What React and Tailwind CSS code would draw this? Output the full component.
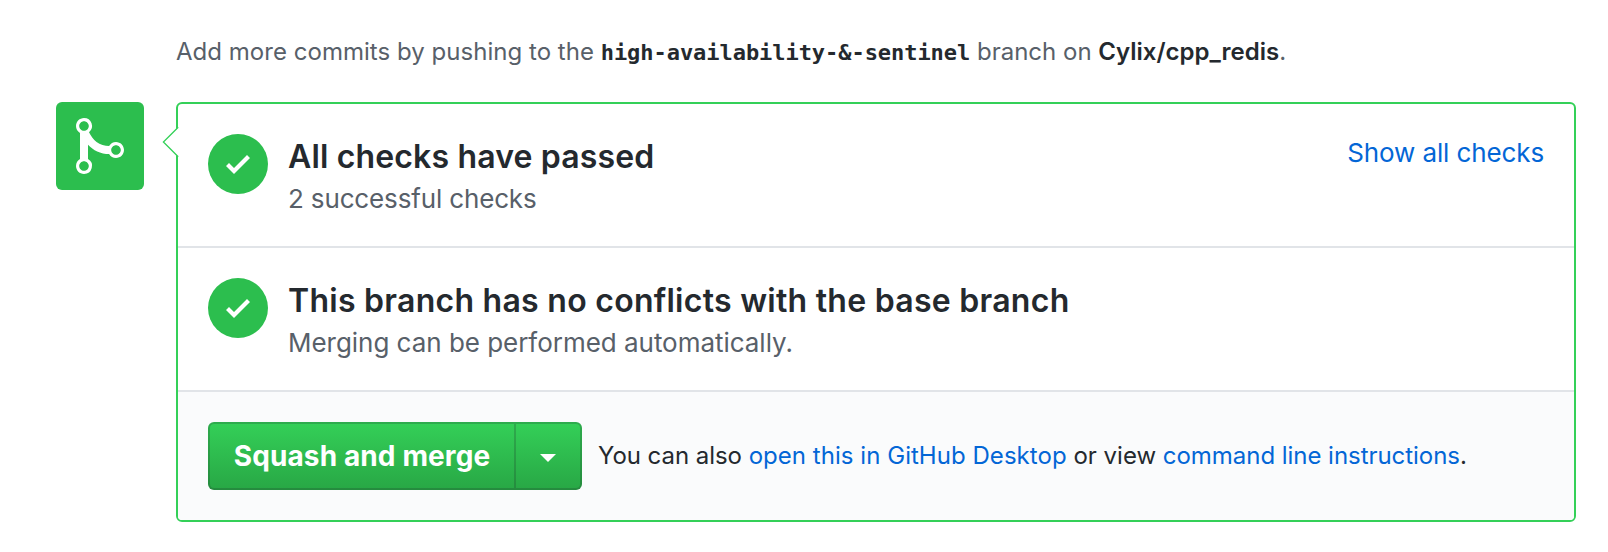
import React from "react";

function CheckCircle() {
  return (
    <div className="flex h-[60px] w-[60px] shrink-0 items-center justify-center rounded-full bg-[#2cbe4e]">
      <svg viewBox="0 0 12 16" className="h-8 w-6" fill="#fff" aria-hidden="true">
        <path fillRule="evenodd" d="M12 5l-8 8-4-4 1.5-1.5L4 10l6.5-6.5L12 5z" />
      </svg>
    </div>
  );
}

function MergeIcon() {
  return (
    <svg viewBox="0 0 12 16" className="h-16 w-12" fill="#fff" aria-hidden="true">
      <path
        fillRule="evenodd"
        d="M10 7c-.73 0-1.38.41-1.73 1.02V8C7.22 7.98 6 7.64 5.14 6.98c-.75-.58-1.5-1.61-1.89-2.44A1.993 1.993 0 0 0 2 .99C.89.99 0 1.89 0 3a2 2 0 0 0 1 1.72v6.56c-.59.35-1 .99-1 1.72 0 1.11.89 2 2 2a1.993 1.993 0 0 0 1-3.72V7.67c.67.7 1.44 1.27 2.3 1.69.86.42 2.03.63 2.97.64v-.02c.36.61 1 1.02 1.73 1.02 1.11 0 2-.89 2-2 0-1.11-.89-2-2-2zm-6.8 6c0 .66-.55 1.2-1.2 1.2-.65 0-1.2-.55-1.2-1.2 0-.65.55-1.2 1.2-1.2.65 0 1.2.55 1.2 1.2zM3.2 3c0 .66-.55 1.2-1.2 1.2C1.35 4.2.8 3.65.8 3c0-.65.55-1.2 1.2-1.2.65 0 1.2.55 1.2 1.2zm6.8 7.2c-.66 0-1.2-.55-1.2-1.2 0-.65.55-1.2 1.2-1.2.65 0 1.2.55 1.2 1.2 0 .65-.55 1.2-1.2 1.2z"
      />
    </svg>
  );
}

function StatusRow({ title, titleClass, detail, detailClass, action }) {
  return (
    <div className="flex h-36 items-start border-b-2 border-[#e1e4e8] px-[30px] pt-[30px]">
      <CheckCircle />
      <div className="ml-5 grow">
        <h3 className={`text-[32px] leading-[45px] font-semibold text-[#24292e] ${titleClass}`}>{title}</h3>
        <p className={`text-[26px] leading-[39px] text-[#586069] ${detailClass}`}>{detail}</p>
      </div>
      {action}
    </div>
  );
}

export default function App() {
  return (
    <div className="h-[552px] w-[1608px] overflow-hidden bg-white pt-8 pr-8 pl-14 font-['Inter',sans-serif]">
      <p className="ml-[120px] h-[70px] text-2xl leading-10 whitespace-nowrap text-[#586069]">
        <span className="tracking-[0.03px]">Add more commits by pushing to the</span>{" "}
        <span className="font-['DejaVu_Sans_Mono',monospace] text-[22px] leading-none font-bold tracking-[-0.05px] text-[#24292e]">
          high-availability-&amp;-sentinel
        </span>{" "}
        <span>branch on</span>{" "}
        <strong className="font-semibold text-[#24292e]">Cylix/cpp_redis</strong>.
      </p>

      <div className="flex items-start gap-8">
        <div className="flex h-[88px] w-[88px] shrink-0 items-center justify-center rounded-md bg-[#2cbe4e]">
          <MergeIcon />
        </div>

        <div className="relative h-[420px] grow rounded-md border-2 border-[#34d058] bg-white">
          <svg viewBox="0 0 18 32" className="absolute top-[22px] -left-4 h-8 w-[18px]" aria-hidden="true">
            <path d="M16 1.6h2v28.8h-2L1.4 16z" fill="#fff" />
            <path d="M16.2 1.2L1.4 16l14.8 14.8" fill="none" stroke="#34d058" strokeWidth="1.3" />
          </svg>

          <StatusRow
            title="All checks have passed"
            titleClass="tracking-[0.15px]"
            detail="2 successful checks"
            detailClass="tracking-[-0.15px]"
            action={
              <a className="text-[26px] leading-[37px] tracking-[-0.12px] text-[#0366d6]">Show all checks</a>
            }
          />
          <StatusRow
            title="This branch has no conflicts with the base branch"
            titleClass="tracking-[0.27px]"
            detail="Merging can be performed automatically."
            detailClass="tracking-[-0.03px]"
          />

          <div className="flex h-32 items-center rounded-b-[4px] bg-[#fafbfc] px-[30px]">
            <div className="flex h-[68px] shrink-0">
              <button className="w-[308px] rounded-l-md border-2 border-[#1b1f23]/20 bg-linear-to-b from-[#34d058] to-[#28a745] bg-origin-border text-[28px] leading-[62px] font-bold tracking-[0.12px] whitespace-nowrap text-white">
                Squash and merge
              </button>
              <button className="flex w-[66px] items-center justify-center rounded-r-md border-2 border-l-0 border-[#1b1f23]/20 bg-linear-to-b from-[#34d058] to-[#28a745] bg-origin-border">
                <svg viewBox="0 0 16 8" className="mt-1 h-2 w-4" fill="#fff" aria-hidden="true">
                  <path d="M0 0h16L8 8z" />
                </svg>
              </button>
            </div>
            <p className="ml-4 text-2xl leading-8 whitespace-nowrap text-[#24292e]">
              <span className="tracking-[-0.05px]">You can also</span>{" "}
              <a className="tracking-[0.04px] text-[#0366d6]">open this in GitHub Desktop</a> or view{" "}
              <a className="tracking-[-0.04px] text-[#0366d6]">command line instructions</a>.
            </p>
          </div>
        </div>
      </div>
    </div>
  );
}
